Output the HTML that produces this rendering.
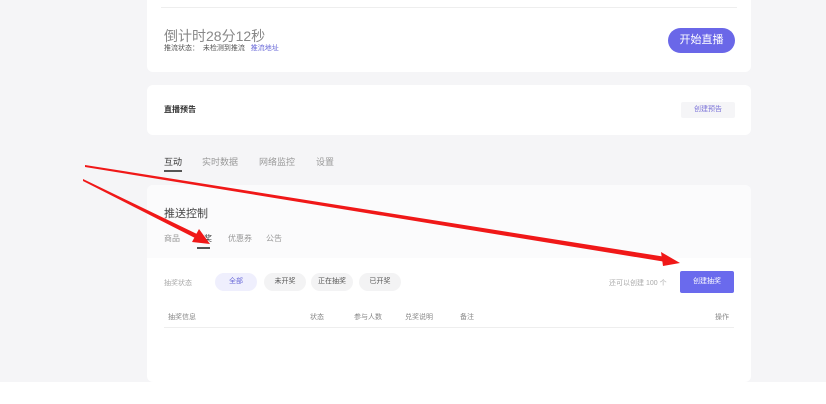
<!DOCTYPE html><html><head><meta charset="utf-8"><style>
body{margin:0;width:826px;height:404px;background:#fff;font-family:"Liberation Sans","Noto Sans CJK SC",sans-serif;position:relative;overflow:hidden}
.bg{position:absolute;left:0;top:0;width:826px;height:382px;background:#f5f5f7}
.card{position:absolute;left:147px;width:604px;background:#fff;border-radius:6px}
.a{position:absolute;white-space:nowrap}
.chip{position:absolute;top:273px;height:18px;border-radius:9px;background:#f3f3f4;font-size:7px;color:#555;text-align:center;line-height:18px}
</style></head><body>
<div class="bg"></div>
<div class="card" style="top:-6px;height:78px">
<div style="position:absolute;left:14px;right:14px;top:13px;height:1px;background:#eee"></div></div>
<div class="a" style="left:164px;top:26px;font-size:14px;color:#888">倒计时28分12秒</div>
<div class="a" style="left:164px;top:43px;font-size:7px;color:#555">推流状态：&nbsp; 未检测到推流 &nbsp; <span style="color:#6a6ad8">推流地址</span></div>
<div class="a" style="left:668px;top:28px;width:67px;height:25px;border-radius:13px;background:#6a67e8;color:#fff;font-size:11px;text-align:center;line-height:25px">开始直播</div>
<div class="card" style="top:85px;height:50px"></div>
<div class="a" style="left:164px;top:104px;font-size:8px;font-weight:bold;color:#333">直播预告</div>
<div class="a" style="left:681px;top:102px;width:54px;height:16px;background:#f5f5f7;border-radius:2px;color:#7a72d8;font-size:7px;text-align:center;line-height:16px">创建预告</div>
<div class="a" style="left:164px;top:155px;font-size:9px;color:#333">互动</div>
<div class="a" style="left:164px;top:170px;width:18px;height:2px;background:#555"></div>
<div class="a" style="left:202px;top:155px;font-size:9px;color:#999">实时数据</div>
<div class="a" style="left:259px;top:155px;font-size:9px;color:#999">网络监控</div>
<div class="a" style="left:316px;top:155px;font-size:9px;color:#999">设置</div>
<div class="card" style="top:185px;height:197px;overflow:hidden"><div style="height:73px;background:#fbfbfc"></div></div>
<div class="a" style="left:164px;top:205px;font-size:11px;color:#444">推送控制</div>
<div class="a" style="left:164px;top:233px;font-size:8px;color:#999">商品</div>
<div class="a" style="left:196px;top:233px;font-size:8px;color:#333">抽奖</div>
<div class="a" style="left:197px;top:247px;width:13px;height:2px;background:#555"></div>
<div class="a" style="left:228px;top:233px;font-size:8px;color:#999">优惠券</div>
<div class="a" style="left:266px;top:233px;font-size:8px;color:#999">公告</div>
<div class="a" style="left:164px;top:278px;font-size:7px;color:#aaa">抽奖状态</div>
<div class="chip" style="left:215px;width:42px;background:#efeffd;color:#6a6ad8">全部</div>
<div class="chip" style="left:264px;width:42px">未开奖</div>
<div class="chip" style="left:311px;width:42px">正在抽奖</div>
<div class="chip" style="left:359px;width:42px">已开奖</div>
<div class="a" style="left:609px;top:278px;font-size:7px;color:#aaa">还可以创建 100 个</div>
<div class="a" style="left:680px;top:271px;width:54px;height:22px;background:#6a6aed;border-radius:2px;color:#fff;font-size:7px;text-align:center;line-height:22px">创建抽奖</div>
<div class="a" style="left:168px;top:312px;font-size:7px;color:#888">抽奖信息</div>
<div class="a" style="left:310px;top:312px;font-size:7px;color:#888">状态</div>
<div class="a" style="left:354px;top:312px;font-size:7px;color:#888">参与人数</div>
<div class="a" style="left:405px;top:312px;font-size:7px;color:#888">兑奖说明</div>
<div class="a" style="left:460px;top:312px;font-size:7px;color:#888">备注</div>
<div class="a" style="left:715px;top:312px;font-size:7px;color:#888">操作</div>
<div class="a" style="left:164px;top:327px;width:570px;height:1px;background:#eee"></div>
<svg class="a" style="left:0;top:0" width="826" height="404">
<polygon points="85,165 666,257 666,262 85,167" fill="#f01818"/>
<polygon points="680,263 661,252 663,266" fill="#f01818"/>
<polygon points="83,179 199,235 197,239 83,181" fill="#f01818"/>
<polygon points="210,244 192,242 199,229" fill="#f01818"/>
</svg>
</body></html>
